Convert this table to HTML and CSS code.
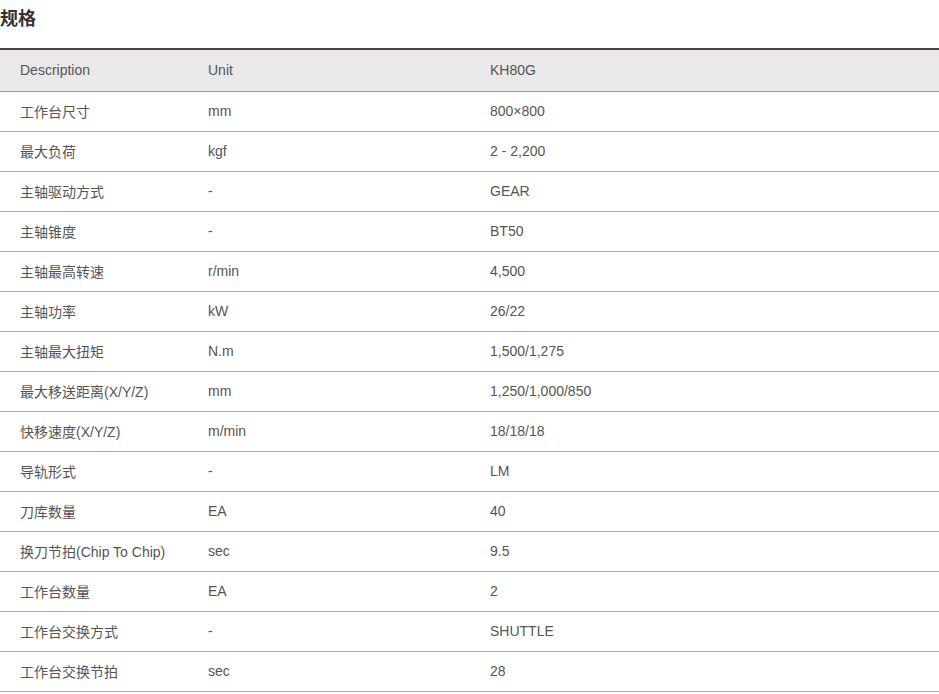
FILE: index.html
```html
<!DOCTYPE html>
<html lang="zh">
<head>
<meta charset="utf-8">
<title>规格</title>
<link rel="stylesheet" href="styles.css">
</head>
<body>
<h3 class="title">规格</h3>
<table class="spec">
<colgroup><col class="c1"><col class="c2"><col class="c3"></colgroup>
<thead>
<tr><th>Description</th><th>Unit</th><th>KH80G</th></tr>
</thead>
<tbody>
<tr><td>工作台尺寸</td><td>mm</td><td>800×800</td></tr>
<tr><td>最大负荷</td><td>kgf</td><td>2 - 2,200</td></tr>
<tr><td>主轴驱动方式</td><td>-</td><td>GEAR</td></tr>
<tr><td>主轴锥度</td><td>-</td><td>BT50</td></tr>
<tr><td>主轴最高转速</td><td>r/min</td><td>4,500</td></tr>
<tr><td>主轴功率</td><td>kW</td><td>26/22</td></tr>
<tr><td>主轴最大扭矩</td><td>N.m</td><td>1,500/1,275</td></tr>
<tr><td>最大移送距离(X/Y/Z)</td><td>mm</td><td>1,250/1,000/850</td></tr>
<tr><td>快移速度(X/Y/Z)</td><td>m/min</td><td>18/18/18</td></tr>
<tr><td>导轨形式</td><td>-</td><td>LM</td></tr>
<tr><td>刀库数量</td><td>EA</td><td>40</td></tr>
<tr><td>换刀节拍(Chip To Chip)</td><td>sec</td><td>9.5</td></tr>
<tr><td>工作台数量</td><td>EA</td><td>2</td></tr>
<tr><td>工作台交换方式</td><td>-</td><td>SHUTTLE</td></tr>
<tr><td>工作台交换节拍</td><td>sec</td><td>28</td></tr>
</tbody>
</table>
</body>
</html>
```
FILE: styles.css
```css
html, body {
  margin: 0;
  padding: 0;
  background: #fff;
}
body {
  font-family: "Liberation Sans", Arial, "Noto Sans CJK SC", sans-serif;
  color: #555;
}
.title {
  margin: 0;
  padding-top: 4px;
  font-size: 18px;
  line-height: 26px;
  font-weight: bold;
  color: #333;
  font-family: "Noto Sans CJK SC", sans-serif;
}
.spec {
  width: 100%;
  margin-top: 18px;
  border-collapse: collapse;
  border-top: 2px solid #4b4341;
  font-size: 14px;
  table-layout: fixed;
}
.c1 { width: 188px; }
.c2 { width: 282px; }
.c3 { width: auto; }
.spec th,
.spec td {
  box-sizing: border-box;
  text-align: left;
  font-weight: normal;
  padding: 0 20px;
  height: 40px;
  border-bottom: 1px solid #aaa;
  color: #555;
  white-space: nowrap;
}
.spec thead th {
  background: #e9e9e9;
  height: 42px;
  border-bottom-color: #999;
}
```
